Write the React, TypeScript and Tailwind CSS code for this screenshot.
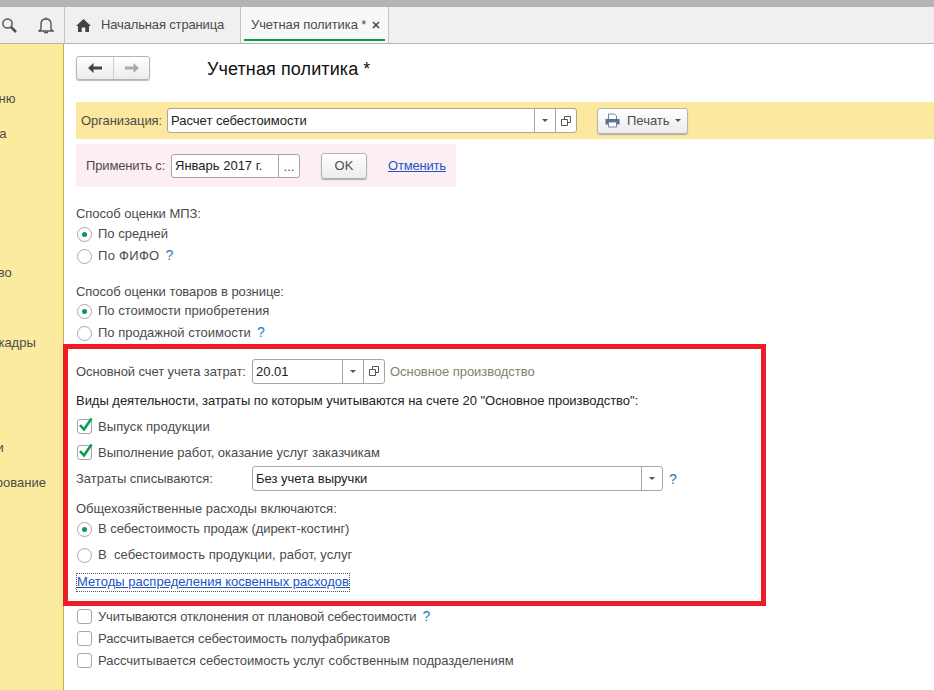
import { ReactNode } from "react";

const font = "font-['Liberation_Sans',Arial,sans-serif]";

function Arrow({ dir, color }: { dir: "left" | "right"; color: string }) {
  return (
    <svg width="16" height="12" viewBox="0 0 16 12" className={dir === "right" ? "-scale-x-100" : ""}>
      <path d="M1 6 L6.5 1 V4.5 H15 V7.5 H6.5 V11 Z" fill={color} />
    </svg>
  );
}

function OpenIcon() {
  return (
    <svg width="10" height="10" viewBox="0 0 10 10" fill="none" stroke="#555">
      <path d="M3.5 3.5 V0.5 H9.5 V6.5 H6.5" />
      <path d="M0.5 3.5 H6.5 V9.5 H0.5 Z" />
    </svg>
  );
}

function Caret() {
  return <span className="block h-0 w-0 border-x-[3px] border-t-[3px] border-x-transparent border-t-[#555]" />;
}

function Radio({ checked, children, h = "h-[22px]" }: { checked?: boolean; children: ReactNode; h?: string }) {
  return (
    <div className={`flex items-center ${h}`}>
      <span className="ml-px flex h-[15px] w-[15px] shrink-0 items-center justify-center rounded-full border border-[#a8a8a8] bg-white">
        {checked && <span className="h-[5px] w-[5px] rounded-full bg-[#0a9a50]" />}
      </span>
      <span className="ml-[6px] whitespace-pre text-[#4b4b4b]">{children}</span>
    </div>
  );
}

function Check({ checked, children, h = "h-[22px]" }: { checked?: boolean; children: ReactNode; h?: string }) {
  return (
    <div className={`flex items-center ${h}`}>
      <span className="relative ml-px h-[15px] w-[15px] shrink-0 rounded-[3px] border border-[#a8a8a8] bg-white">
        {checked && (
          <svg width="18" height="17" viewBox="0 0 18 17" className="absolute -left-[1px] -top-[4px]">
            <path d="M3 9 L7 13.5 L14.5 2.5" fill="none" stroke="#0a9a50" strokeWidth="2.6" />
          </svg>
        )}
      </span>
      <span className="ml-[6px] whitespace-nowrap pt-px text-[#4b4b4b]">{children}</span>
    </div>
  );
}

function Help() {
  return <span className="ml-[6px] text-[14px] leading-none tracking-normal text-[#1b7cc2]">?</span>;
}

function Field({ value, width, open = true, h = "h-[25px]" }: { value: string; width: string; open?: boolean; h?: string }) {
  return (
    <div className={`flex shrink-0 items-stretch rounded-[3px] border border-[#a6a6a6] bg-white ${width} ${h}`}>
      <span className="flex-1 truncate pl-[3px] leading-[23px] text-[#222]">{value}</span>
      <span className="flex w-[21px] items-center justify-center border-l border-[#a6a6a6]">
        <Caret />
      </span>
      {open && (
        <span className="flex w-[21px] items-center justify-center border-l border-[#a6a6a6]">
          <OpenIcon />
        </span>
      )}
    </div>
  );
}

function Side({ text, left }: { text?: string; left: string }) {
  return (
    <div className="h-[34.9px] overflow-hidden">
      {text && <span className={`block whitespace-nowrap leading-[35px] text-[#4b4b4b] ${left}`}>{text}</span>}
    </div>
  );
}

export default function App() {
  return (
    <div className={`flex h-[690px] w-[934px] flex-col overflow-hidden bg-white text-[13px] ${font}`}>
      <div className="h-[7px] shrink-0 bg-[#b4b4b4]" />
      <div className="flex h-[37px] shrink-0 border-b border-[#b4b4b4] bg-[#f0f0f0]">
        <div className="flex w-[65px] shrink-0 items-center border-r border-[#c4c4c4]">
          <svg width="16" height="17" viewBox="0 0 16 17" fill="none" stroke="#555" strokeWidth="1.5" className="ml-px">
            <circle cx="6.5" cy="6.5" r="4.6" />
            <path d="M10 10 L15 15" strokeWidth="2.6" />
          </svg>
          <svg width="16" height="17" viewBox="0 0 16 17" fill="none" stroke="#555" strokeWidth="1.4" className="ml-[21px]">
            <path d="M3 12 V7 C3 3.8 5 2 8 2 C11 2 13 3.8 13 7 V12 L15 14 H1 Z" />
            <path d="M6 15.5 H10" strokeWidth="1.6" />
            <path d="M8 0.5 V2" />
          </svg>
        </div>
        <div className="flex w-[176px] shrink-0 items-center border-r border-[#c4c4c4] pl-[11px] text-[#4b4b4b]">
          <svg width="15" height="13" viewBox="0 0 15 13" fill="#444">
            <path d="M7.5 0 L15 7 H13 V13 H9.3 V8.5 H5.7 V13 H2 V7 H0 Z" />
          </svg>
          <span className="ml-[10px] whitespace-nowrap tracking-[-0.15px]">Начальная страница</span>
        </div>
        <div className="relative flex w-[148px] shrink-0 items-center border-r border-[#c4c4c4] bg-[#f8f8f8] pl-[10px] text-[#4b4b4b]">
          <span className="whitespace-nowrap tracking-[-0.08px]">Учетная политика *</span>
          <svg width="8" height="8" viewBox="0 0 8 8" stroke="#444" strokeWidth="1.6" className="ml-[6px]">
            <path d="M1 1 L7 7 M7 1 L1 7" />
          </svg>
          <span className="absolute bottom-[2px] left-[3px] h-[2px] w-[141px] bg-[#0a9a50]" />
        </div>
      </div>

      <div className="flex min-h-0 flex-1">
        <div className="w-[64px] shrink-0 overflow-hidden border-r border-[#c9b04a] bg-[#fbeb9e] pt-[37px]">
          <Side text="Главное меню" left="-ml-[71px]" />
          <Side text="Банк и касса" left="-ml-[70px]" />
          <Side left="" />
          <Side left="" />
          <Side left="" />
          <Side text="Производство" left="-ml-[73px]" />
          <Side left="" />
          <Side text="Зарплата и кадры" left="-ml-[73px]" />
          <Side left="" />
          <Side left="" />
          <Side text="Справочники" left="-ml-[75px]" />
          <Side text="Администрирование" left="-ml-[78px]" />
        </div>

        <main className="flex-1 pl-[12px]">
          <div className="mt-[12px] flex h-[24px] items-center">
            <div className="flex h-[24px] w-[74px] rounded-[3px] border border-[#b4b4b4] bg-gradient-to-b from-white to-[#ececec] shadow-[0_1px_1px_#bbb]">
              <span className="flex w-[37px] items-center justify-center border-r border-[#cfcfcf]">
                <Arrow dir="left" color="#444" />
              </span>
              <span className="flex flex-1 items-center justify-center">
                <Arrow dir="right" color="#aaa" />
              </span>
            </div>
            <h1 className="ml-[57px] mt-[3px] whitespace-nowrap text-[18px] tracking-[0.1px] text-[#111]">Учетная политика *</h1>
          </div>

          <div className="mt-[22px] flex h-[37px] items-center bg-[#fce89e] pl-[5px]">
            <span className="w-[86px] tracking-[-0.08px] text-[#4b4b4b]">Организация:</span>
            <Field value="Расчет себестоимости" width="w-[410px]" />
            <button className="ml-[20px] flex h-[26px] w-[91px] items-center rounded-[3px] border border-[#b4b4b4] bg-gradient-to-b from-white to-[#ececec] pl-[7px] shadow-[0_1px_1px_#aaa]">
              <svg width="15" height="15" viewBox="0 0 15 15">
                <path d="M3.5 6 V1 H9.5 L11.5 3 V6" fill="#fff" stroke="#6d87a3" />
                <path d="M0.5 6 H14.5 V11.5 H0.5 Z" fill="#4f7196" />
                <path d="M3.5 9 H11.5 V14 H3.5 Z" fill="#fff" stroke="#6d87a3" />
              </svg>
              <span className="ml-[7px] text-[#4b4b4b]">Печать</span>
              <span className="ml-[5px]"><Caret /></span>
            </button>
          </div>

          <div className="mt-[5px] flex h-[43px] w-[380px] items-center bg-[#fdeef3] pl-[10px]">
            <span className="w-[85px] tracking-[-0.15px] text-[#4b4b4b]">Применить с:</span>
            <div className="flex h-[24px] w-[129px] rounded-[3px] border border-[#a6a6a6] bg-white">
              <span className="flex-1 pl-[3px] leading-[22px] text-[#222]">Январь 2017 г.</span>
              <span className="w-[21px] border-l border-[#a6a6a6] text-center leading-[24px] text-[#444]">...</span>
            </div>
            <button className="ml-[21px] h-[26px] w-[46px] rounded-[3px] border border-[#b4b4b4] bg-gradient-to-b from-white to-[#ececec] text-[#4b4b4b] shadow-[0_1px_1px_#aaa]">
              OK
            </button>
            <a className="ml-[21px] tracking-[-0.2px] text-[#1b55c4] underline">Отменить</a>
          </div>

          <div className="mt-[17px] h-[19px] leading-[19px] tracking-[-0.05px] text-[#4b4b4b]">Способ оценки МПЗ:</div>
          <Radio checked>По средней</Radio>
          <Radio>
            <span className="tracking-[0.3px]">По ФИФО</span><Help />
          </Radio>
          <div className="mt-[15px] h-[18px] leading-[20px] tracking-[-0.05px] text-[#4b4b4b]">Способ оценки товаров в рознице:</div>
          <Radio checked>По стоимости приобретения</Radio>
          <Radio>
            По продажной стоимости<Help />
          </Radio>

          <section className="-ml-[13px] h-[262px] w-[703px] border-[5px] border-[#ee1c25] pl-[8px] pt-[10px]">
            <div className="flex h-[24px] items-center">
              <span className="w-[176px] whitespace-nowrap pt-px tracking-[-0.08px] text-[#4b4b4b]">Основной счет учета затрат:</span>
              <Field value="20.01" width="w-[133px]" h="h-[25px]" />
              <span className="ml-[5px] whitespace-nowrap pt-px tracking-[-0.05px] text-[#84806a]">Основное производство</span>
            </div>
            <div className="mt-[8px] h-[18px] whitespace-nowrap leading-[20px] tracking-[-0.03px] text-[#222]">
              Виды деятельности, затраты по которым учитываются на счете 20 "Основное производство":
            </div>
            <div className="mt-[4px]">
              <Check checked h="h-[26px]"><span className="tracking-[0.1px]">Выпуск продукции</span></Check>
              <Check checked h="h-[26px]">Выполнение работ, оказание услуг заказчикам</Check>
            </div>
            <div className="mt-[1px] flex items-center">
              <span className="w-[176px] whitespace-nowrap pt-px text-[#4b4b4b]">Затраты списываются:</span>
              <Field value="Без учета выручки" width="w-[411px]" open={false} />
              <Help />
            </div>
            <div className="mt-[9px] h-[18px] leading-[18px] text-[#4b4b4b]">Общехозяйственные расходы включаются:</div>
            <Radio checked><span className="tracking-[-0.05px]">В себестоимость продаж (директ-костинг)</span></Radio>
            <div className="mt-[2px]">
              <Radio h="h-[26px]"><span className="tracking-[0.05px]">В  себестоимость продукции, работ, услуг</span></Radio>
            </div>
            <div className="mt-[4px]">
              <a className="ml-px inline-block h-[17px] whitespace-nowrap leading-[16px] tracking-[0.03px] text-[#1b55c4] underline outline-1 outline-dotted outline-[#555]">
                Методы распределения косвенных расходов
              </a>
            </div>
          </section>

          <div className="-mt-px">
            <Check>
              <span className="tracking-[-0.15px]">Учитываются отклонения от плановой себестоимости</span><Help />
            </Check>
            <Check><span className="tracking-[-0.09px]">Рассчитывается себестоимость полуфабрикатов</span></Check>
            <Check>Рассчитывается себестоимость услуг собственным подразделениям</Check>
          </div>
        </main>
      </div>
    </div>
  );
}
